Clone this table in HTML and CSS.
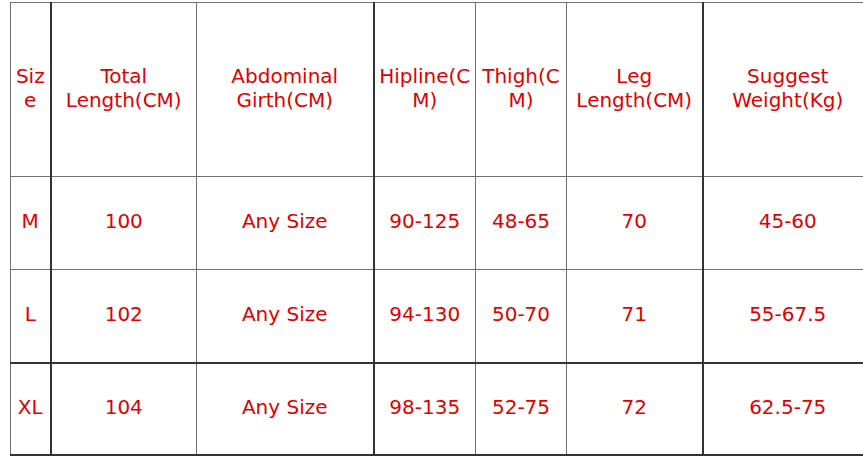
FILE: index.html
```html
<!DOCTYPE html>
<html>
<head>
<meta charset="utf-8">
<link rel="stylesheet" href="styles.css">
</head>
<body>
<table class="size-table">
  <colgroup>
    <col class="c1"><col class="c2"><col class="c3"><col class="c4"><col class="c5"><col class="c6"><col class="c7">
  </colgroup>
  <tr class="head">
    <td class="thick-r">Size</td>
    <td>Total Length(CM)</td>
    <td class="thick-r">Abdominal Girth(CM)</td>
    <td>Hipline(CM)</td>
    <td>Thigh(CM)</td>
    <td class="thick-r">Leg Length(CM)</td>
    <td>Suggest Weight(Kg)</td>
  </tr>
  <tr class="row">
    <td class="thick-r">M</td><td>100</td><td class="thick-r">Any Size</td><td>90-125</td><td>48-65</td><td class="thick-r">70</td><td>45-60</td>
  </tr>
  <tr class="row thick-b">
    <td class="thick-r">L</td><td>102</td><td class="thick-r">Any Size</td><td>94-130</td><td>50-70</td><td class="thick-r">71</td><td>55-67.5</td>
  </tr>
  <tr class="row last thick-b">
    <td class="thick-r">XL</td><td>104</td><td class="thick-r">Any Size</td><td>98-135</td><td>52-75</td><td class="thick-r">72</td><td>62.5-75</td>
  </tr>
</table>
</body>
</html>
```
FILE: styles.css
```css
html, body {
  margin: 0;
  padding: 0;
  background: #fff;
  overflow: hidden;
}
.size-table {
  margin: 2px 0 0 10px;
  border-collapse: collapse;
  table-layout: fixed;
  width: 862px;
  font-family: "DejaVu Sans", Verdana, sans-serif;
  font-size: 20px;
  line-height: 24px;
  color: #e00000;
}
.c1 { width: 40px; }
.c2 { width: 146px; }
.c3 { width: 177px; }
.c4 { width: 102px; }
.c5 { width: 91px; }
.c6 { width: 136px; }
.c7 { width: 170px; }
.size-table td {
  border: 1px solid #707070;
  text-align: center;
  vertical-align: middle;
  padding: 0 1px 4px;
  overflow-wrap: anywhere;
}
.size-table td.thick-r {
  border-right: 2px solid #333;
}
.size-table tr.thick-b td {
  border-bottom: 2px solid #333;
}
.head { height: 174px; }
.row { height: 93px; }
.row.last { height: 92px; }
```
